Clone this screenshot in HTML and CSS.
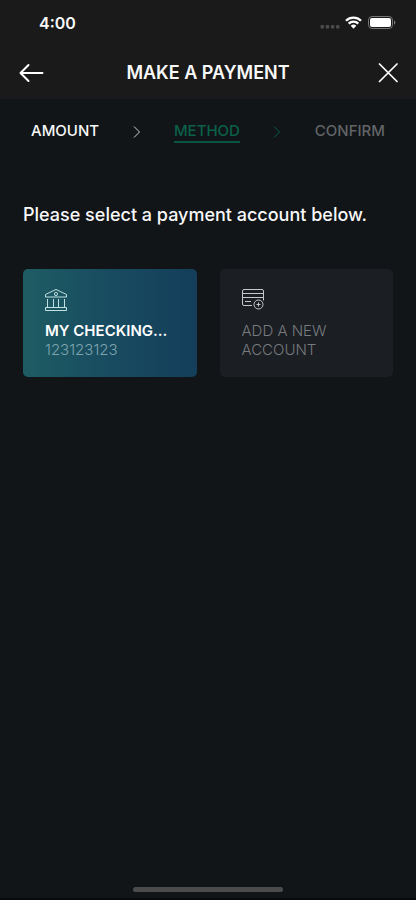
FILE: index.html
```html
<!DOCTYPE html>
<html lang="en">
<head>
<meta charset="utf-8">
<meta name="viewport" content="width=device-width, initial-scale=1">
<title>Make a payment</title>
<link rel="stylesheet" href="styles.css">
</head>
<body>
<div class="screen">
  <header class="top">
    <div class="status">
      <time class="clock">4:00</time>
      <div class="indicators">
        <svg width="20" height="4" viewBox="0 0 20 4" fill="#4b4b4b" aria-hidden="true"><rect x=".5" width="3.500" height="3.500" rx="1"/><rect x="5.700" width="3.500" height="3.500" rx="1"/><rect x="10.900" width="3.500" height="3.500" rx="1"/><rect x="16" width="3.500" height="3.500" rx="1"/></svg>
        <svg class="wifi" width="17" height="13" viewBox="0 0 17 13" aria-hidden="true"><g fill="none" stroke="#fff" stroke-width="2.3"><path d="M1 4.8a10.6 10.6 0 0 1 15 0"/><path d="M3.7 7.6a6.8 6.8 0 0 1 9.6 0"/></g><path d="M5.7 9.8a4 4 0 0 1 5.6 0L8.5 12.8z" fill="#fff"/></svg>
        <svg class="battery" width="28" height="13" viewBox="0 0 28 13" aria-hidden="true"><rect x=".5" y=".5" width="24" height="12" rx="3.6" fill="none" stroke="#777"/><rect x="2" y="2" width="21" height="9" rx="2" fill="#fff"/><path d="M26 4.4c1.8.5 1.8 3.7 0 4.2z" fill="#777"/></svg>
      </div>
    </div>
    <div class="nav">
      <button class="icon-button" type="button" aria-label="Back"><svg width="26" height="20" viewBox="0 0 26 20" fill="none" stroke="#fff" stroke-width="2" stroke-linecap="round" stroke-linejoin="round"><path d="M2.500 10h22M10.500 2 2.500 10l8 8"/></svg></button>
      <h1 class="title">MAKE A PAYMENT</h1>
      <button class="icon-button close" type="button" aria-label="Close"><svg width="20" height="20" viewBox="0 0 20 20" fill="none" stroke="#fff" stroke-width="1.700" stroke-linecap="round"><path d="m1.500 1 17.500 17.500M19 1 1.500 18.500"/></svg></button>
    </div>
  </header>
  <main class="content">
    <ol class="steps">
      <li class="step">AMOUNT</li>
      <li class="divider" aria-hidden="true"><svg width="8" height="12" viewBox="0 0 8 12" fill="none" stroke="currentColor"><path d="m1 .5 5.500 5.500L1 11.500"/></svg></li>
      <li class="step current" aria-current="step">METHOD</li>
      <li class="divider green" aria-hidden="true"><svg width="8" height="12" viewBox="0 0 8 12" fill="none" stroke="currentColor"><path d="m1 .5 5.500 5.500L1 11.500"/></svg></li>
      <li class="step upcoming">CONFIRM</li>
    </ol>
    <p class="prompt">Please select a payment account below.</p>
    <div class="accounts">
      <button class="card selected" type="button">
        <svg class="card-icon" width="24" height="24" viewBox="0 0 24 24" fill="none" stroke="#bfe0e2" stroke-linejoin="round" aria-hidden="true"><path d="M1.500 6.500 12 1.500l10.500 5v2.500h-21zM1.500 19.500h21v3h-21zM3.500 11v8.500M9.500 11v8.500M14.500 11v8.500M20.500 11v8.500"/><circle cx="12" cy="6" r="1.600"/></svg>
        <span class="card-name">MY CHECKING...</span>
        <span class="card-detail">123123123</span>
      </button>
      <button class="card" type="button">
        <svg class="card-icon" width="24" height="24" viewBox="0 0 24 24" fill="none" stroke="#c6c8ca" aria-hidden="true"><path d="M11 17.500H3A1.500 1.500 0 0 1 1.500 16V3A1.500 1.500 0 0 1 3 1.500h18A1.500 1.500 0 0 1 22.500 3v9.500M1.500 5.500h21M1.500 9.500h21M4 13.500h6"/><circle cx="17.500" cy="16.500" r="4.500"/><path d="M17.500 14.500v4M15.500 16.500h4"/></svg>
        <span class="card-action">ADD A NEW ACCOUNT</span>
      </button>
    </div>
  </main>
  <div class="home"></div>
</div>
</body>
</html>
```
FILE: styles.css
```css
* {
  box-sizing: border-box;
}

body {
  margin: 0;
  background: #111518;
  color: #f8f8f8;
  font-family: Inter, "Liberation Sans", sans-serif;
}

button {
  margin: 0;
  padding: 0;
  border: 0;
  background: none;
  color: inherit;
  font: inherit;
  text-align: left;
}

svg {
  display: block;
}

.screen {
  display: flex;
  flex-direction: column;
  min-height: 100vh;
  border-bottom: 2px solid #08090c;
}

.top {
  background: #1a1a1a;
  border-bottom: 2px solid #17191d;
}

.status {
  display: flex;
  align-items: center;
  justify-content: space-between;
  height: 45px;
  padding: 0 20px 0 39px;
}

.clock {
  font-size: 16px;
  font-weight: 600;
}

.indicators {
  display: flex;
  align-items: flex-end;
  gap: 5px;
}

.battery {
  margin-left: 1px;
}

.nav {
  display: grid;
  grid-template-columns: 1fr auto 1fr;
  align-items: center;
  height: 52px;
  padding: 4px 18px 0;
}

.icon-button {
  display: flex;
}

.close {
  justify-self: end;
}

.title {
  margin: 0;
  font-size: 18px;
  font-weight: 600;
  line-height: 22px;
}

.content {
  flex: 1;
  padding: 22px 23px;
}

.steps {
  display: flex;
  align-items: center;
  justify-content: space-between;
  margin: 0;
  padding: 0 8px;
  list-style: none;
  font-size: 15px;
  font-weight: 500;
  line-height: 20px;
}

.step {
  border-bottom: 2px solid transparent;
}

.current {
  border-color: #0a5541;
  color: #0a6049;
}

.upcoming {
  color: #626467;
}

.divider {
  color: #d0d2d3;
}

.green {
  color: #0a6049;
}

.prompt {
  margin: 60px 0 42px;
  font-size: 18px;
  font-weight: 500;
  line-height: 24px;
}

.accounts {
  display: grid;
  grid-template-columns: 1fr 1fr;
  gap: 23px;
}

.card {
  display: flex;
  flex-direction: column;
  align-items: flex-start;
  min-height: 108px;
  padding: 19px 22px 18px;
  border-radius: 5px;
  background: #1b1e22;
  color: #777a7e;
  font-size: 15px;
  line-height: 19px;
}

.selected {
  background: linear-gradient(90deg, #1e5c63, #184b60 50%, #143e5a);
  color: #fff;
}

.card-icon {
  margin: 0 0 9px -1px;
}

.card-name {
  font-weight: 600;
  white-space: nowrap;
}

.card-detail,
.card-action {
  font-weight: 300;
}

.card-detail {
  color: #7fa3ae;
}

.home {
  width: 36%;
  height: 5px;
  margin: 0 auto 6px;
  border-radius: 3px;
  background: #4b4b4c;
}
```
